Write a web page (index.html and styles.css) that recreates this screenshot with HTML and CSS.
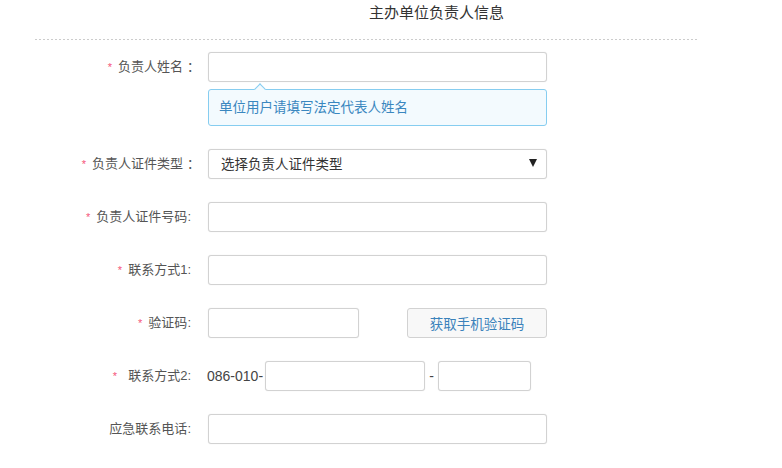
FILE: index.html
```html
<!DOCTYPE html>
<html lang="zh-CN">
<head>
  <meta charset="UTF-8" />
  <meta name="viewport" content="width=device-width, initial-scale=1" />
  <title>主办单位负责人信息</title>
  <link rel="stylesheet" href="styles.css">
</head>
<body>
  <div class="page">
    <h2 class="section-title">主办单位负责人信息</h2>
    <div class="divider"></div>

    <form class="info-form">
      <div class="form-row">
        <label class="form-label"><span class="req">*</span>负责人姓名<span class="colon-full">：</span></label>
        <div class="form-field">
          <input class="text-input" type="text">
          <div class="tip">单位用户请填写法定代表人姓名</div>
        </div>
      </div>

      <div class="form-row">
        <label class="form-label"><span class="req">*</span>负责人证件类型<span class="colon-full">：</span></label>
        <div class="form-field">
          <div class="select-wrap">
            <select class="text-input select-input">
              <option>选择负责人证件类型</option>
              <option>身份证</option>
              <option>护照</option>
            </select>
          </div>
        </div>
      </div>

      <div class="form-row">
        <label class="form-label"><span class="req">*</span>负责人证件号码<span class="colon">:</span></label>
        <div class="form-field">
          <input class="text-input" type="text">
        </div>
      </div>

      <div class="form-row">
        <label class="form-label"><span class="req">*</span>联系方式1<span class="colon">:</span></label>
        <div class="form-field">
          <input class="text-input" type="text">
        </div>
      </div>

      <div class="form-row">
        <label class="form-label"><span class="req">*</span>验证码<span class="colon">:</span></label>
        <div class="form-field inline">
          <input class="text-input short" type="text">
          <button type="button" class="btn-code">获取手机验证码</button>
        </div>
      </div>

      <div class="form-row">
        <label class="form-label"><span class="req wide">*</span>联系方式2<span class="colon">:</span></label>
        <div class="form-field inline">
          <span class="prefix">086-010-</span>
          <input class="text-input phone" type="text">
          <span class="sep">-</span>
          <input class="text-input ext" type="text">
        </div>
      </div>

      <div class="form-row">
        <label class="form-label">应急联系电话<span class="colon">:</span></label>
        <div class="form-field">
          <input class="text-input" type="text">
        </div>
      </div>
    </form>
  </div>
</body>
</html>
```

FILE: styles.css
```css
body {
  margin: 0;
  background: #fff;
  color: #555;
  font-family: "Liberation Sans", "Noto Sans CJK SC", sans-serif;
  font-size: 13px;
}
.page {
  width: 782px;
  padding-top: 3px;
}
.section-title {
  margin: 0 0 16px 369px;
  font-size: 15px;
  line-height: 20px;
  font-weight: normal;
  color: #333;
}
.divider {
  height: 1px;
  margin: 0 85px 12px 35px;
  background: repeating-linear-gradient(to right, #ccc 0 2px, transparent 2px 4px);
}
.form-row {
  display: flex;
  align-items: flex-start;
  margin-bottom: 23px;
}
.form-label {
  width: 196px;
  height: 30px;
  padding-right: 12px;
  text-align: right;
  line-height: 30px;
  color: #555;
  white-space: nowrap;
}
.colon-full {
  margin-left: 4px;
  margin-right: -4px;
}
.colon {
  margin-right: 5px;
}
.req {
  color: #f5557a;
  font-size: 11px;
  margin-right: 6px;
}
.req.wide {
  margin-right: 11px;
}
.form-field {
  width: 339px;
}
.form-field.inline {
  display: flex;
  align-items: center;
}
.text-input {
  display: block;
  box-sizing: border-box;
  width: 339px;
  height: 30px;
  margin: 0;
  padding: 0 12px;
  border: 1px solid #d2d2d2;
  border-radius: 3px;
  box-shadow: 0 0 1px #ddd;
  background: #fff;
  font-family: inherit;
  font-size: 13.5px;
  color: #333;
}
.text-input.short {
  width: 151px;
}
.text-input.phone {
  width: 160px;
}
.text-input.ext {
  width: 93px;
}
.select-wrap {
  position: relative;
}
.select-wrap::after {
  content: "";
  position: absolute;
  right: 10px;
  top: 10px;
  border-left: 4px solid transparent;
  border-right: 4px solid transparent;
  border-top: 8px solid #222;
}
.select-input {
  appearance: none;
  -webkit-appearance: none;
  outline: none;
}
.tip {
  position: relative;
  box-sizing: border-box;
  height: 37px;
  margin-top: 7px;
  padding: 0 10px;
  line-height: 35px;
  border: 1px solid #86cdf0;
  border-radius: 3px;
  background: #f3fafe;
  color: #3a87bf;
  font-size: 13.5px;
}
.tip::before {
  content: "";
  position: absolute;
  top: -5px;
  left: 47px;
  width: 7px;
  height: 7px;
  border-top: 1px solid #86cdf0;
  border-left: 1px solid #86cdf0;
  background: #f3fafe;
  transform: rotate(45deg);
}
.btn-code {
  box-sizing: border-box;
  width: 140px;
  height: 30px;
  margin-left: 48px;
  border: 1px solid #d2d2d2;
  border-radius: 3px;
  background: #f8f8f8;
  color: #3a82bb;
  font-family: inherit;
  font-size: 13.5px;
  cursor: pointer;
}
.prefix {
  margin-left: -1px;
  margin-right: 2px;
  font-size: 14px;
  color: #444;
}
.sep {
  width: 13px;
  text-align: center;
  font-size: 14px;
  color: #444;
}
```
